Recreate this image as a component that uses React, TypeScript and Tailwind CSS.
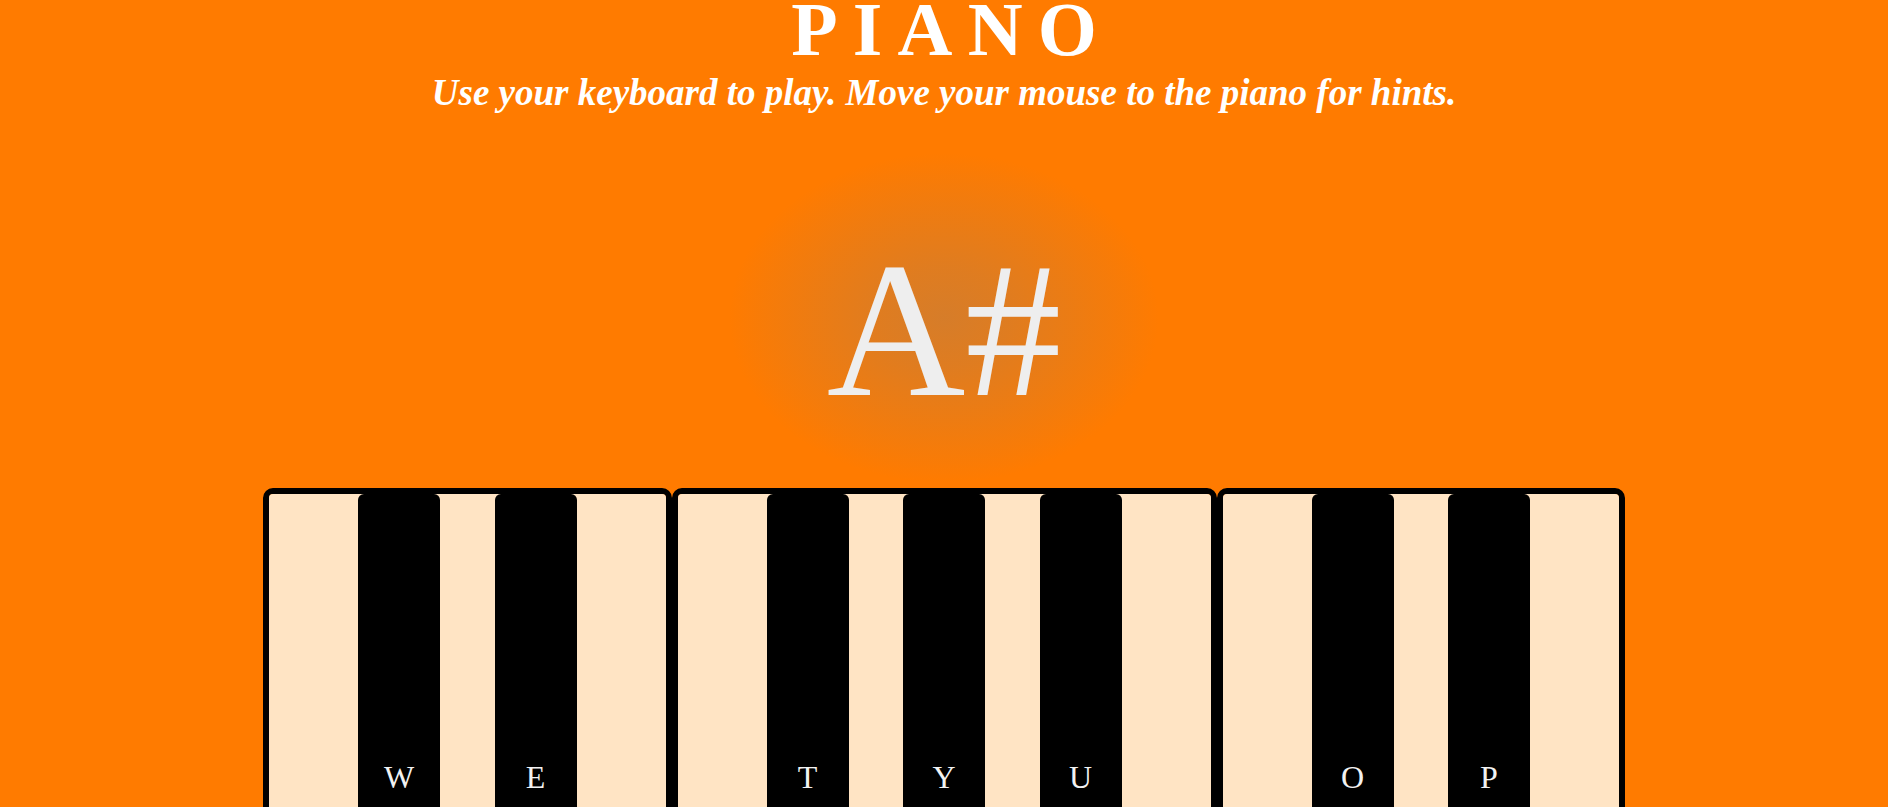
const groups = [["W", "E"], ["T", "Y", "U"], ["O", "P"]];

const BlackKey = ({ label }: { label: string }) => {
  return (
    <div className="w-[82px] h-[320px] shrink-0 bg-black rounded-[6px] flex flex-col justify-end items-center pb-[18px]">
      <span className="text-[32px] leading-[37px] text-[#f2f2f2]">{label}</span>
    </div>
  );
};

export default function App() {
  return (
    <div className="min-h-screen bg-[#ff7b00] flex flex-col items-center font-['Liberation_Serif','Times_New_Roman',serif] overflow-hidden">
      {/* Title */}
      <h1 className="text-white font-bold text-[76px] leading-[58px] tracking-[0.2em] pl-[0.2em] text-center">
        PIANO
      </h1>
      <p className="mt-[14px] text-white font-bold italic text-[37px] leading-[42px]">
        Use your keyboard to play. Move your mouse to the piano for hints.
      </p>

      {/* Current note */}
      <div className="mt-[39px] w-[460px] h-[330px] pt-[82px] flex justify-center bg-[radial-gradient(215px_165px_at_50%_50%,rgba(128,128,128,0.32)_0%,rgba(128,128,128,0.25)_30%,rgba(128,128,128,0.15)_60%,rgba(128,128,128,0.06)_85%,rgba(128,128,128,0)_100%)]">
        <span className="text-[192px] leading-[192px] text-[#eeeeee]">A#</span>
      </div>

      {/* Keyboard */}
      <div className="mt-[5px] flex">
        {groups.map((g, i) => (
          <div key={i} className="border-[6px] border-black rounded-[10px] overflow-hidden">
            <div className="h-[400px] bg-[#ffe4c4] flex items-start gap-[54.5px] px-[89px]">
              {g.map((k) => (
                <BlackKey key={k} label={k} />
              ))}
            </div>
          </div>
        ))}
      </div>
    </div>
  );
}
